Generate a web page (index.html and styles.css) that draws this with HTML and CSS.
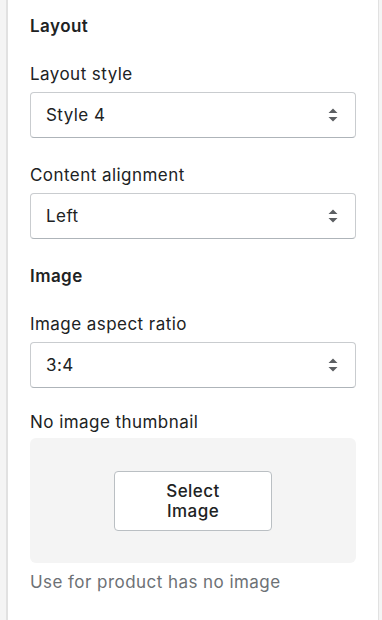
FILE: index.html
```html
<!DOCTYPE html>
<html lang="en">
<head>
<meta charset="utf-8">
<title>Layout settings</title>
<link rel="stylesheet" href="styles.css">
</head>
<body>
<div class="panel">
  <h3 class="heading">Layout</h3>
  <div class="field">
    <label class="label">Layout style</label>
    <div class="select"><span class="select-value">Style 4</span><svg class="select-arrow" width="10" height="14" viewBox="0 0 10 14"><path d="M5 0.5 L9.5 5 H0.5 Z M5 13.5 L9.5 9 H0.5 Z" fill="#5c5f62"/></svg></div>
  </div>
  <div class="field">
    <label class="label">Content alignment</label>
    <div class="select"><span class="select-value">Left</span><svg class="select-arrow" width="10" height="14" viewBox="0 0 10 14"><path d="M5 0.5 L9.5 5 H0.5 Z M5 13.5 L9.5 9 H0.5 Z" fill="#5c5f62"/></svg></div>
  </div>
  <h3 class="heading">Image</h3>
  <div class="field field-compact">
    <label class="label">Image aspect ratio</label>
    <div class="select"><span class="select-value">3:4</span><svg class="select-arrow" width="10" height="14" viewBox="0 0 10 14"><path d="M5 0.5 L9.5 5 H0.5 Z M5 13.5 L9.5 9 H0.5 Z" fill="#5c5f62"/></svg></div>
  </div>
  <div class="field">
    <label class="label label-tight">No image thumbnail</label>
    <div class="dropzone"><button class="btn">Select<br>Image</button></div>
    <p class="help">Use for product has no image</p>
  </div>
</div>
</body>
</html>
```
FILE: styles.css
```css
html, body {
  margin: 0;
  padding: 0;
  height: 100%;
}
body {
  background: #f4f4f4;
  font-family: "Inter", "Liberation Sans", sans-serif;
  font-size: 17px;
  line-height: 20px;
  letter-spacing: 0.45px;
  color: #202223;
}
.panel {
  margin-left: 6px;
  width: 373px;
  min-height: 100%;
  box-sizing: border-box;
  background: #ffffff;
  border-left: 2px solid #e1e1e1;
  border-right: 1px solid #e1e1e1;
  padding: 16px 22px 0 22px;
}
.heading {
  margin: 0 0 28px 0;
  font-size: 17px;
  line-height: 20px;
  font-weight: 600;
}
.field {
  margin-bottom: 27px;
}
.field-compact {
  margin-bottom: 24px;
}
.label {
  display: block;
  margin-bottom: 8px;
}
.label-tight {
  margin-bottom: 6px;
}
.select {
  height: 46px;
  box-sizing: border-box;
  border: 1px solid #c9cccf;
  border-bottom-color: #aeb4b9;
  border-radius: 4px;
  display: flex;
  align-items: center;
  justify-content: space-between;
  padding: 0 17px 0 15px;
}
.select-arrow {
  display: block;
}
.dropzone {
  height: 125px;
  background: #f4f4f4;
  border-radius: 6px;
  display: flex;
  align-items: center;
  justify-content: center;
}
.btn {
  width: 158px;
  height: 60px;
  background: #ffffff;
  border: 1px solid #babfc3;
  border-radius: 4px;
  font-family: inherit;
  font-size: 17px;
  line-height: 20px;
  letter-spacing: 0.45px;
  font-weight: 500;
  color: #202223;
  padding: 0;
}
.help {
  margin: 9px 0 0 0;
  color: #6d7175;
}
```
